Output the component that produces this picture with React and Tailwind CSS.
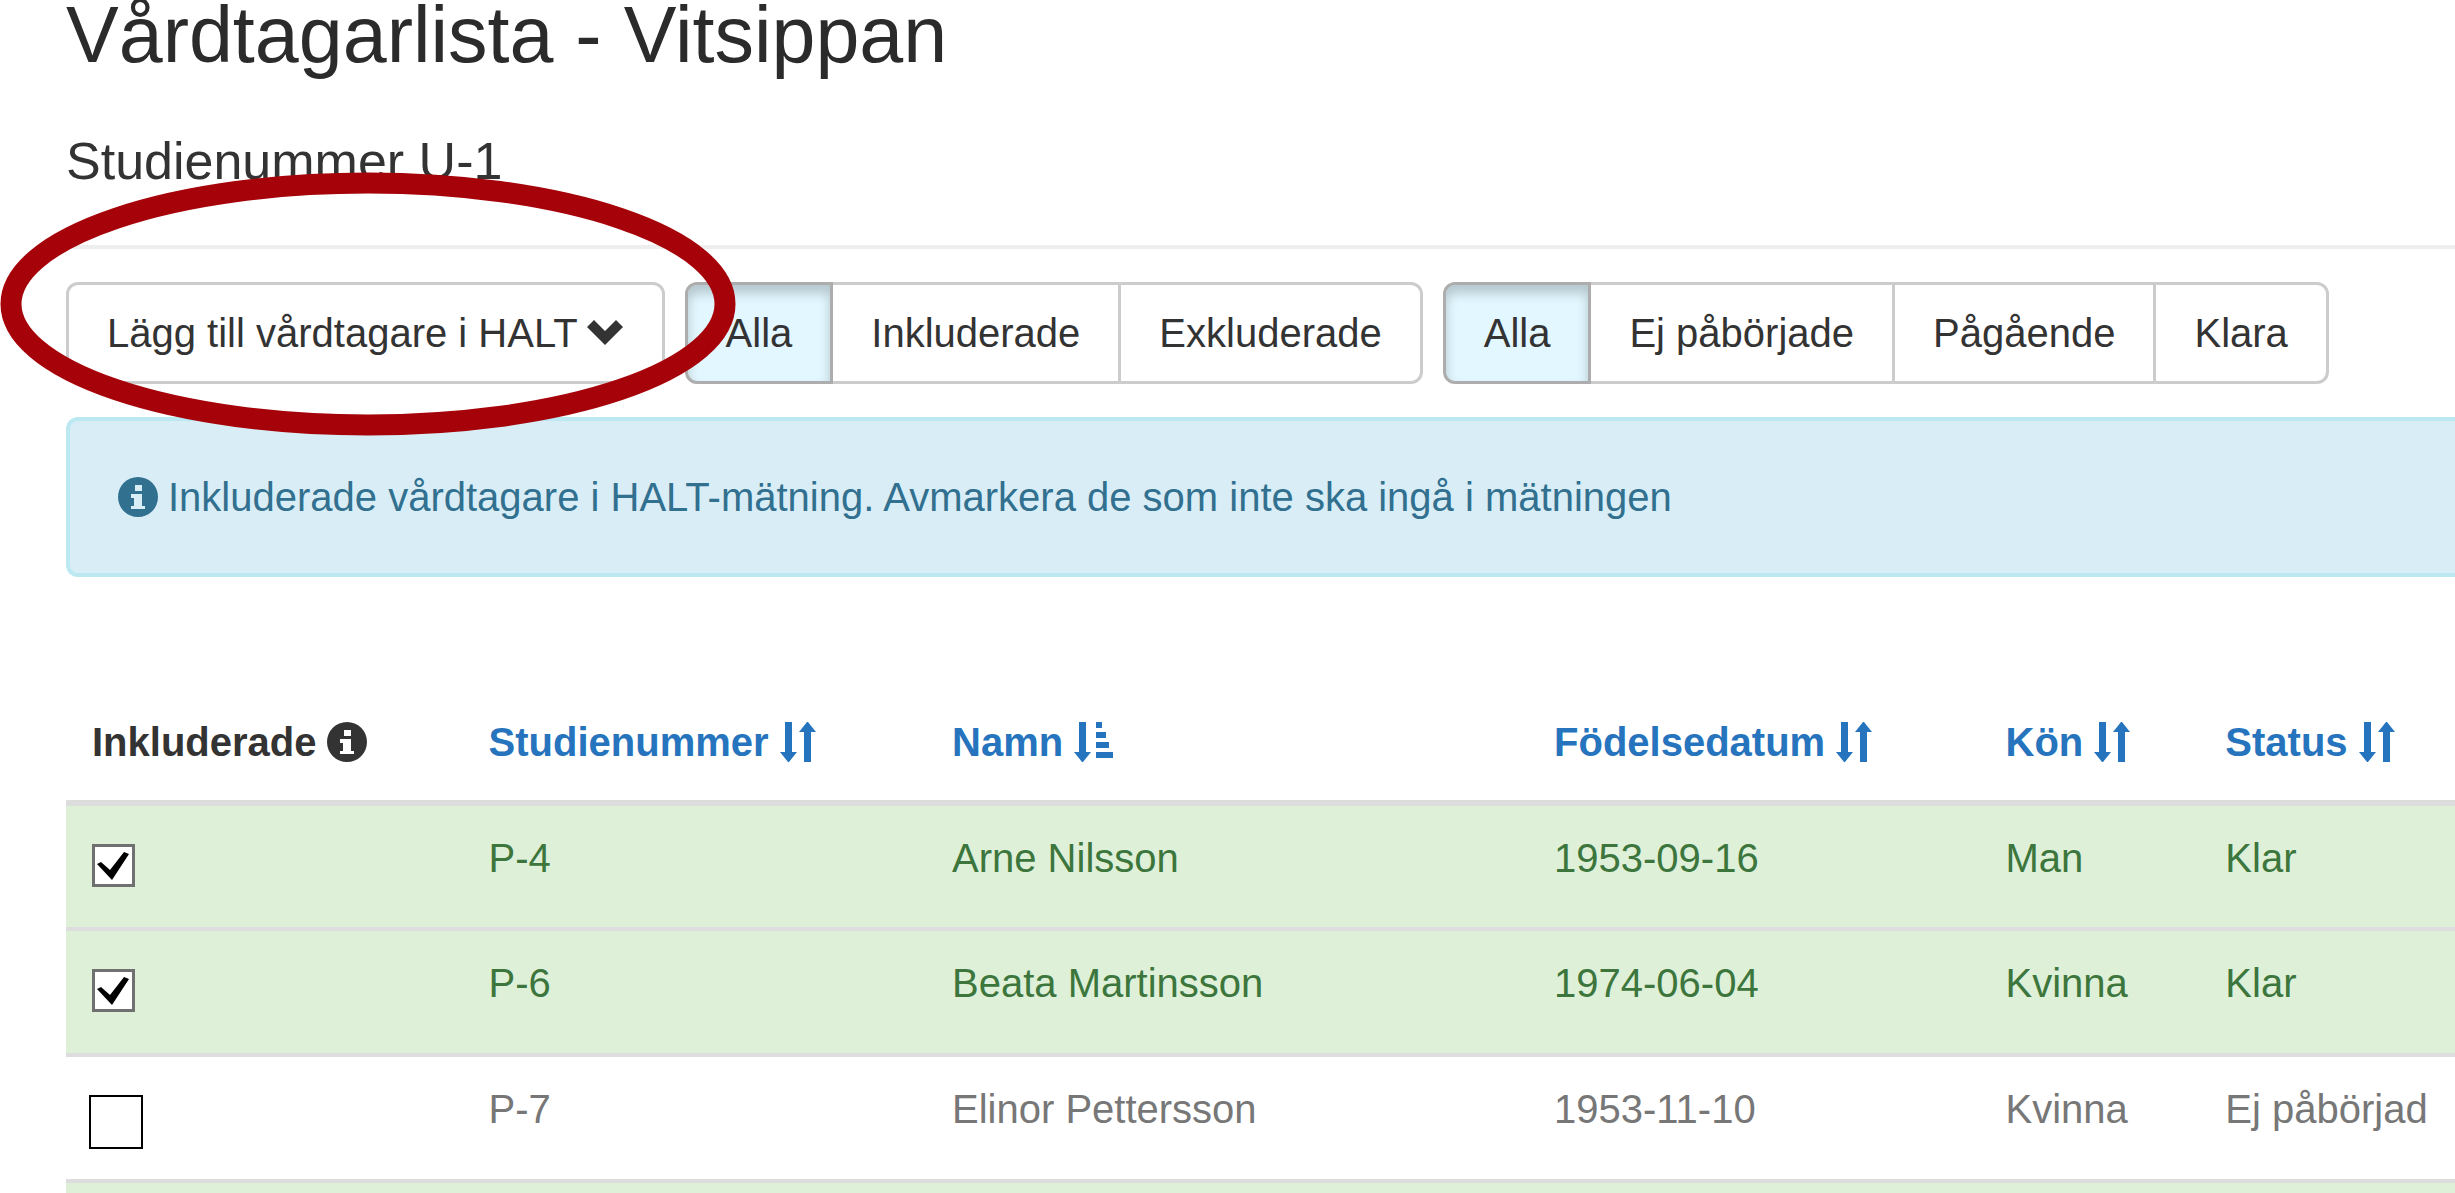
import { useState } from 'react';

const INITIAL_ROWS = [
  { id: 'P-4', name: 'Arne Nilsson', born: '1953-09-16', sex: 'Man', status: 'Klar', included: true },
  { id: 'P-6', name: 'Beata Martinsson', born: '1974-06-04', sex: 'Kvinna', status: 'Klar', included: true },
  { id: 'P-7', name: 'Elinor Pettersson', born: '1953-11-10', sex: 'Kvinna', status: 'Ej påbörjad', included: false },
];

const COLUMNS = [
  { key: 'id', label: 'Studienummer', width: 'w-[19.4%]' },
  { key: 'name', label: 'Namn', width: 'w-[25.2%]', sorted: true },
  { key: 'born', label: 'Födelsedatum', width: 'w-[18.9%]' },
  { key: 'sex', label: 'Kön', width: 'w-[9.2%]' },
  { key: 'status', label: 'Status', width: '' },
];

function InfoIcon() {
  return (
    <svg viewBox="0 0 40 40" className="size-10 shrink-0" fill="currentColor" aria-hidden="true">
      <path fillRule="evenodd" d="M20 0a20 20 0 1 1 0 40a20 20 0 0 1 0-40zM17 8v6h7V8zM13 17v4h3v8h-3v3h14v-3h-3V17z" />
    </svg>
  );
}

function ChevronIcon() {
  return (
    <svg viewBox="0 0 38 26" className="h-[26px] w-[38px] shrink-0" fill="currentColor" aria-hidden="true">
      <path d="M8 0L19 11L30 0L37 7L19 25L1 7z" />
    </svg>
  );
}

// Down arrow next to an up arrow, or next to growing bars for the active sort
function SortIcon({ sorted }) {
  return (
    <svg viewBox="0 0 40 40" className="size-10 shrink-0" fill="currentColor" aria-hidden="true">
      <path d="M6 0h7v30h5L10 40H9L1 30h5z" />
      {sorted
        ? <path d="M23 0h6v6h-6zM23 10h10v6H23zM23 20h13v6H23zM23 30h17v6H23z" />
        : <path d="M25 40h7V10h5L29 0h-1L20 10h5z" />}
    </svg>
  );
}

function FilterGroup({ label, options }) {
  const [active, setActive] = useState(options[0]);
  return (
    <div role="group" aria-label={label} className="flex">
      {options.map((o) => (
        <button key={o} type="button" onClick={() => setActive(o)} aria-pressed={o === active}
          className={`-ml-[3px] border-[3px] px-[38px] py-5 leading-[56px] first:ml-0 first:rounded-l-xl last:rounded-r-xl ${o === active ? 'relative border-[#adadad] bg-[#e2f7ff] shadow-[inset_0_8px_12px_rgba(0,0,0,0.2)]' : 'border-[#ccc] bg-white'}`}>
          {o}
        </button>
      ))}
    </div>
  );
}

function IncludeBox({ row, onToggle }) {
  return (
    <label className="grid w-fit">
      <input type="checkbox" checked={row.included} onChange={onToggle} aria-label={`Inkludera ${row.name}`}
        className={`col-start-1 row-start-1 appearance-none bg-white ${row.included ? 'size-[43px] border-[3px] border-[#707070]' : '-ml-[3px] size-[54px] border-2 border-black'}`} />
      {row.included && (
        <svg viewBox="0 0 43 43" className="pointer-events-none col-start-1 row-start-1 size-[43px]" aria-hidden="true">
          <path d="M5 20L9 18L18 26L32 8L37 10L20 36z" fill="#000" />
        </svg>
      )}
    </label>
  );
}

export default function App() {
  const [rows, setRows] = useState(INITIAL_ROWS);
  const toggle = (id) => setRows((rs) => rs.map((r) => (r.id === id ? { ...r, included: !r.included } : r)));

  return (
    <main className="relative h-screen overflow-hidden bg-white pl-[66px] font-['Liberation_Sans',Arial,sans-serif] text-[40px] leading-[56px] text-[#333]">
      <h1 className="text-[79px] leading-[70px] text-[#2b2b2b]">Vårdtagarlista - Vitsippan</h1>
      <h2 className="mt-[62px] text-[52px] leading-[58px]">Studienummer U-1</h2>
      <hr className="mt-[55px] border-t-4 border-[#eee]" />

      <div className="mt-[33px] flex gap-5">
        <button type="button" className="flex items-center gap-2 rounded-xl border-[3px] border-[#ccc] bg-white px-[38px] py-5 leading-[56px]">
          Lägg till vårdtagare i HALT <ChevronIcon />
        </button>
        <FilterGroup label="Inkludering" options={['Alla', 'Inkluderade', 'Exkluderade']} />
        <FilterGroup label="Status" options={['Alla', 'Ej påbörjade', 'Pågående', 'Klara']} />
      </div>

      <div role="status" className="mt-[33px] flex items-center gap-[10px] rounded-l-xl border-4 border-r-0 border-[#bce8f1] bg-[#d9edf7] px-12 py-12 text-[#31708f]">
        <InfoIcon /> Inkluderade vårdtagare i HALT-mätning. Avmarkera de som inte ska ingå i mätningen
      </div>

      <table className="mt-[121px] w-full table-fixed border-collapse text-left">
        <thead>
          <tr className="border-b-[6px] border-[#ddd]">
            <th className="w-[16.6%] pt-4 pb-[30px] pl-[26px]">
              <span className="flex items-center gap-[10px]">Inkluderade <InfoIcon /></span>
            </th>
            {COLUMNS.map((c) => (
              <th key={c.key} className={`pt-4 pb-[30px] pl-[26px] ${c.width}`}>
                <a href={`#${c.key}`} className="flex items-center gap-[10px] text-[#2674bd]">{c.label} <SortIcon sorted={c.sorted} /></a>
              </th>
            ))}
          </tr>
        </thead>
        <tbody>
          {rows.map((r) => (
            <tr key={r.id} className={`h-[126px] border-b-4 border-[#ddd] align-top ${r.included ? 'bg-[#dff0d8] text-[#3c763d]' : 'bg-white text-[#777]'}`}>
              <td className="pt-[38px] pl-[26px]"><IncludeBox row={r} onToggle={() => toggle(r.id)} /></td>
              {COLUMNS.map((c) => <td key={c.key} className="pt-6 pl-[26px] whitespace-nowrap">{r[c.key]}</td>)}
            </tr>
          ))}
          <tr className="h-[126px] bg-[#dff0d8]"><td colSpan={6} /></tr>
        </tbody>
      </table>

      {/* Hand-drawn marker round the add button */}
      <svg viewBox="0 0 736 264" className="pointer-events-none absolute top-[172px] left-0 h-[264px] w-[736px]" aria-hidden="true">
        <ellipse cx="368" cy="132" rx="357" ry="121" fill="none" stroke="#a50309" strokeWidth="21" />
      </svg>
    </main>
  );
}
